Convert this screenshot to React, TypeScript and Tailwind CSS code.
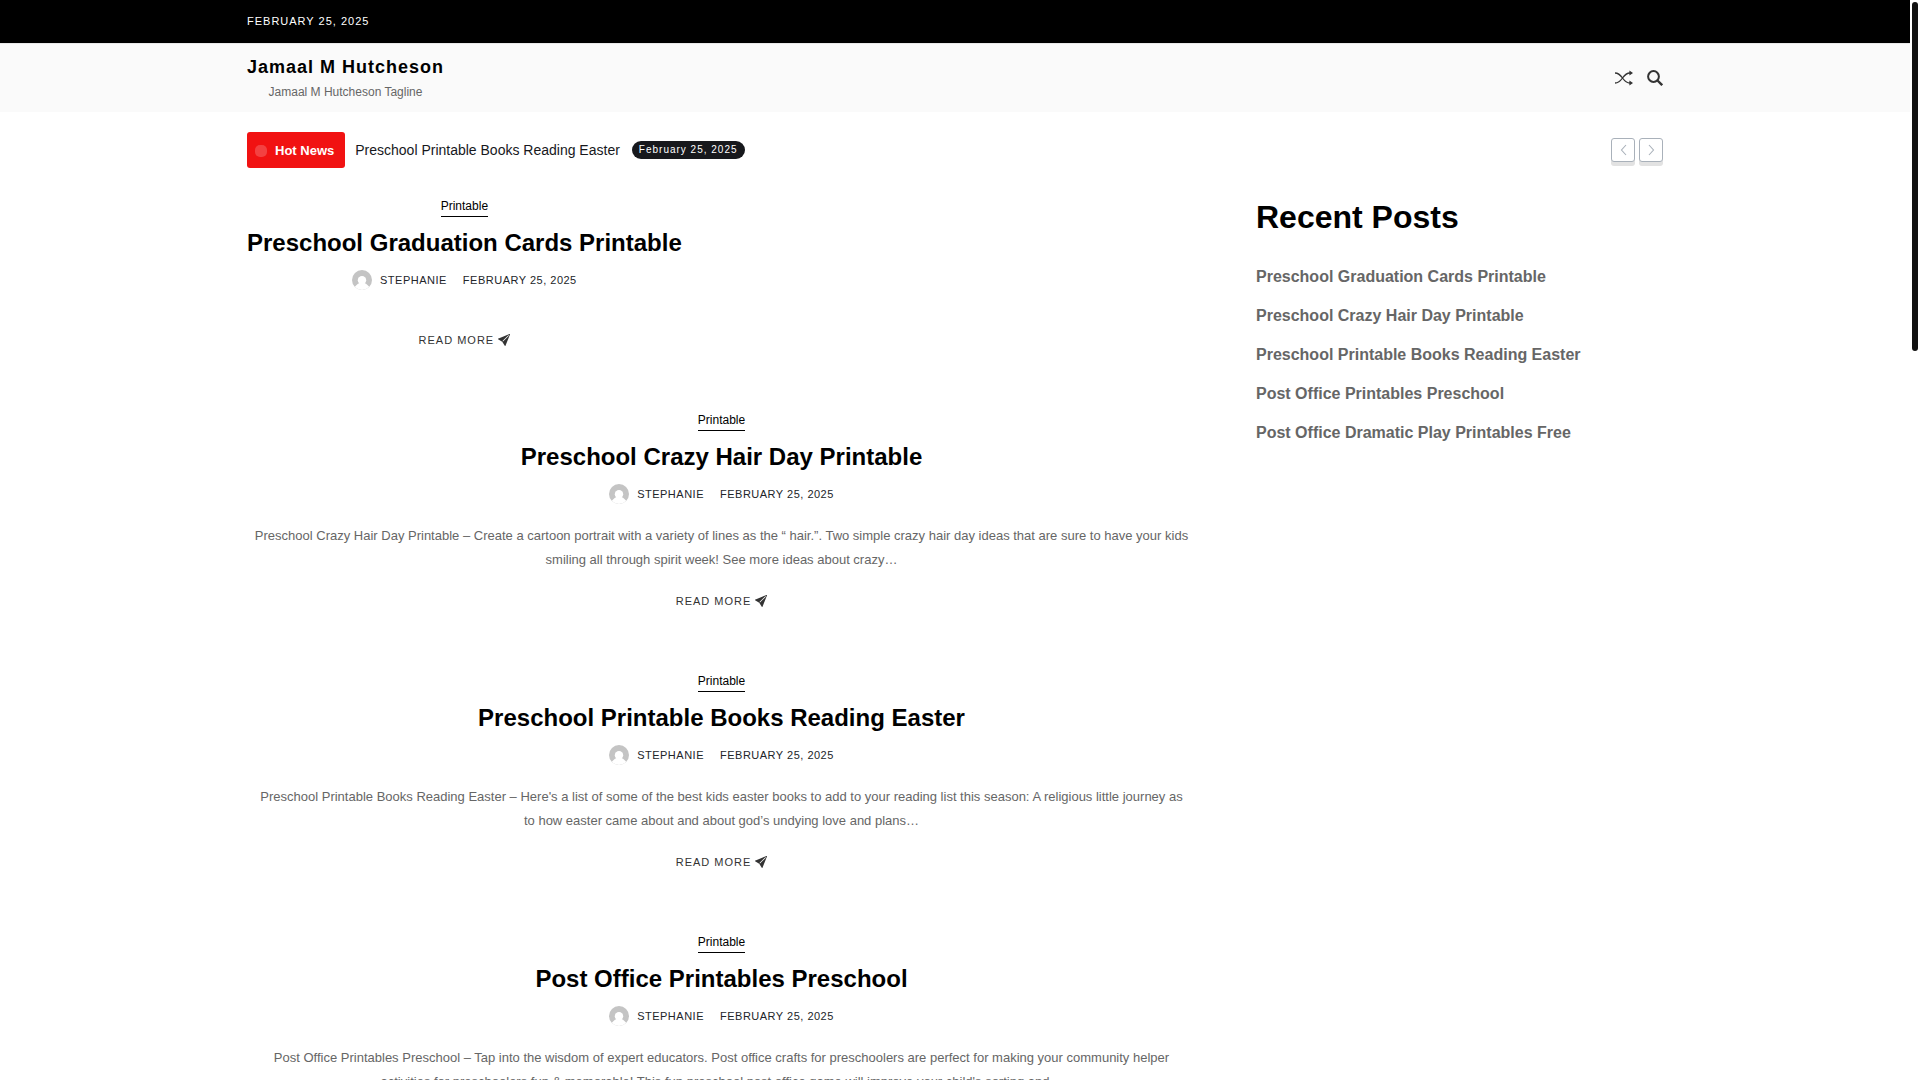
import React from 'react';
import { BsSendFill } from 'react-icons/bs';

interface Post {
  title: string;
  excerpt?: string;
}

const DATE = 'February 25, 2025';

const posts: Post[] = [
  { title: 'Preschool Graduation Cards Printable' },
  {
    title: 'Preschool Crazy Hair Day Printable',
    excerpt:
      'Preschool Crazy Hair Day Printable – Create a cartoon portrait with a variety of lines as the “ hair.”. Two simple crazy hair day ideas that are sure to have your kids smiling all through spirit week! See more ideas about crazy…',
  },
  {
    title: 'Preschool Printable Books Reading Easter',
    excerpt:
      "Preschool Printable Books Reading Easter – Here's a list of some of the best kids easter books to add to your reading list this season: A religious little journey as to\u00a0how easter came about and about god’s undying love and plans…",
  },
  {
    title: 'Post Office Printables Preschool',
    excerpt:
      "Post Office Printables Preschool – Tap into the wisdom of expert educators. Post office crafts for preschoolers are perfect for making your community helper activities\u00a0for preschoolers fun & memorable! This fun preschool post office game will improve your child's sorting and…",
  },
];

const recentPosts = [
  'Preschool Graduation Cards Printable',
  'Preschool Crazy Hair Day Printable',
  'Preschool Printable Books Reading Easter',
  'Post Office Printables Preschool',
  'Post Office Dramatic Play Printables Free',
];

const Avatar = () => (
  <svg className="h-5 w-5 rounded-full" viewBox="0 0 20 20" aria-hidden="true">
    <rect width="20" height="20" fill="#c4c4c4" />
    <circle cx="10" cy="10.3" r="4.2" fill="#fff" />
    <path d="M7.6 13 C5.4 14 3.4 15.6 2.4 18 L2 20 H18 L17.6 18 C16.6 15.6 14.6 14 12.4 13 Z" fill="#fff" />
  </svg>
);

const ShuffleIcon = () => (
  <svg className="h-[18px] w-[18px]" viewBox="0 0 18 18" aria-hidden="true">
    <path
      d="M0 4 C8 4 7 14 15 14 M0 14 C8 14 7 4 15 4"
      fill="none"
      stroke="currentColor"
      strokeWidth="1.3"
    />
    <path d="M14.4 1.4 L18 4 L14.4 6.6 Z M14.4 11.4 L18 14 L14.4 16.6 Z" fill="currentColor" />
  </svg>
);

const SearchIcon = () => (
  <svg className="h-4 w-4" viewBox="0 0 16 16" fill="none" stroke="currentColor" aria-hidden="true">
    <circle cx="6.5" cy="6.5" r="5.4" strokeWidth="2" />
    <path d="M10.5 10.5 L15.2 15.2" strokeWidth="2.4" />
  </svg>
);

const ArrowButton: React.FC<{ label: string; d: string }> = ({ label, d }) => (
  <button
    type="button"
    aria-label={label}
    className="flex h-6 w-6 items-center justify-center rounded-[3px] border border-[#a9b1ba] bg-white text-[#a9b1ba] shadow-[0_4px_0_#e2e2e2]"
  >
    <svg className="h-3 w-3" viewBox="0 0 12 12" fill="none" stroke="currentColor" aria-hidden="true">
      <path d={d} strokeWidth="1.1" />
    </svg>
  </button>
);

const PostCard: React.FC<{ post: Post }> = ({ post }) => (
  <article className={post.excerpt ? 'text-center' : 'w-fit text-center'}>
    <div className="flex justify-center">
      <a href="#" className="border-b border-black text-xs leading-5 text-black">
        Printable
      </a>
    </div>
    <h2 className="mt-2 text-2xl leading-9 font-bold text-black">
      <a href="#">{post.title}</a>
    </h2>
    <div className="mt-[9px] flex items-center justify-center text-[11px] leading-5 tracking-[0.5px] text-[#222529] uppercase">
      <Avatar />
      <a href="#" className="ml-2">
        Stephanie
      </a>
      <time className="ml-4">{DATE}</time>
    </div>
    {post.excerpt ? (
      <p className="mt-5 text-[13px] leading-6 text-[#666]">{post.excerpt}</p>
    ) : null}
    <div className={post.excerpt ? 'mt-[19px] flex justify-center' : 'mt-10 flex justify-center'}>
      <a
        href="#"
        className="flex items-center gap-1 text-[11px] leading-5 tracking-[1px] text-[#333] uppercase"
      >
        Read More
        <BsSendFill className="h-3 w-3" aria-hidden="true" />
      </a>
    </div>
  </article>
);

export default function App() {
  return (
    <div className="flex h-screen bg-white font-['Liberation_Sans',Arial,sans-serif]">
      <div className="min-w-0 flex-1 overflow-y-auto [scrollbar-width:none]">
        <div className="bg-black">
          <div className="mx-auto max-w-[1440px] px-3 pt-[11px] pb-3 text-[11px] leading-5 tracking-[1px] text-white uppercase">
            <time>{DATE}</time>
          </div>
        </div>

        <header className="border-t border-[#e8e8e8] bg-[#fafafa]">
          <div className="mx-auto flex max-w-[1440px] items-center justify-between px-3 py-2">
            <div className="pt-[3px] text-center">
              <h1 className="mb-px text-lg leading-6 font-bold tracking-[1px] text-black">
                <a href="#">Jamaal M Hutcheson</a>
              </h1>
              <p className="text-xs leading-6 text-[#666]">Jamaal M Hutcheson Tagline</p>
            </div>
            <div className="flex items-center gap-[14px] text-[#333]">
              <button type="button" aria-label="Random post">
                <ShuffleIcon />
              </button>
              <button type="button" aria-label="Search">
                <SearchIcon />
              </button>
            </div>
          </div>
        </header>

        <div className="mx-auto max-w-[1440px] px-3">
          <section className="flex items-center py-5">
            <div className="flex h-9 items-center rounded-[3px] bg-[#f11212] pt-[2px] pr-[11px] pl-2 text-[13px] font-bold text-white">
              <span className="mr-2 h-3 w-3 rounded-[5px] bg-white/20" />
              Hot News
            </div>
            <a href="#" className="ml-[10px] text-sm text-[#17181c]">
              Preschool Printable Books Reading Easter
            </a>
            <time className="ml-3 rounded-full bg-[#17181c] px-[7px] text-[10px] leading-[18px] tracking-[1px] text-white">
              {DATE}
            </time>
            <div className="ml-auto flex gap-1">
              <ArrowButton label="Previous" d="M9 1 L4.5 6 L9 11" />
              <ArrowButton label="Next" d="M4 1 L8.5 6 L4 11" />
            </div>
          </section>

          <div className="flex gap-[60px]">
            <main className="flex min-w-0 flex-1 flex-col gap-[60px] pt-2">
              {posts.map((post) => (
                <PostCard key={post.title} post={post} />
              ))}
            </main>

            <aside className="w-[407px] shrink-0 pt-2">
              <h2 className="text-[32px] leading-[42px] font-bold text-black">Recent Posts</h2>
              <ul className="mt-[27px] flex flex-col gap-[15px]">
                {recentPosts.map((title) => (
                  <li key={title} className="text-base leading-6 font-bold text-[#666]">
                    <a href="#">{title}</a>
                  </li>
                ))}
              </ul>
            </aside>
          </div>
        </div>
      </div>

      {/* Scroll rail */}
      <div className="w-[10px] shrink-0 px-[2px] pt-[2px]">
        <div className="h-[349px] rounded-full bg-[#111]" />
      </div>
    </div>
  );
}
